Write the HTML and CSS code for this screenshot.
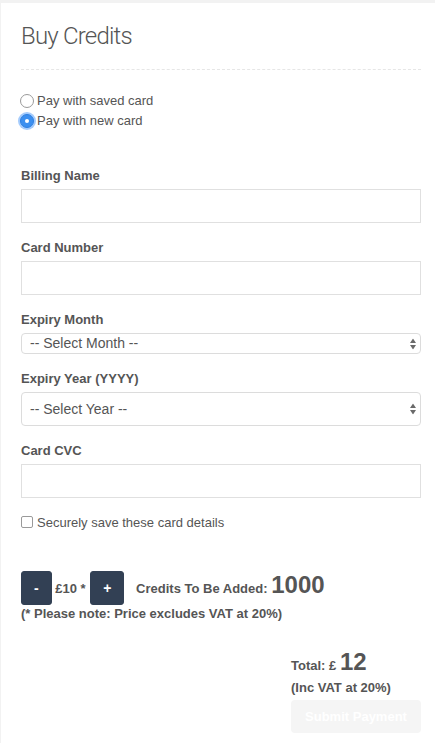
FILE: index.html
```html
<!DOCTYPE html>
<html>
<head>
<meta charset="utf-8">
<link rel="stylesheet" href="styles.css">
</head>
<body>
<div class="panel">
  <h2 class="title">Buy Credits</h2>
  <div class="divider"></div>
  <div class="radios">
    <label class="radio-row"><span class="radio"></span>Pay with saved card</label>
    <label class="radio-row"><span class="radio checked"></span>Pay with new card</label>
  </div>
  <form class="form">
    <div class="group">
      <label class="label">Billing Name</label>
      <input class="input" type="text">
    </div>
    <div class="group">
      <label class="label">Card Number</label>
      <input class="input" type="text">
    </div>
    <div class="group">
      <label class="label">Expiry Month</label>
      <div class="select-wrap">
        <select class="select small"><option>-- Select Month --</option></select>
        <svg class="arrows" width="6" height="11" viewBox="0 0 6 11"><path d="M3 0 L6 4.5 L0 4.5 Z M3 11 L6 6.5 L0 6.5 Z" fill="#6a6a6a"/></svg>
      </div>
    </div>
    <div class="group">
      <label class="label">Expiry Year (YYYY)</label>
      <div class="select-wrap">
        <select class="select large"><option>-- Select Year --</option></select>
        <svg class="arrows" width="6" height="11" viewBox="0 0 6 11"><path d="M3 0 L6 4.5 L0 4.5 Z M3 11 L6 6.5 L0 6.5 Z" fill="#6a6a6a"/></svg>
      </div>
    </div>
    <div class="group">
      <label class="label">Card CVC</label>
      <input class="input" type="text">
    </div>
  </form>
  <label class="check-row"><span class="checkbox"></span>Securely save these card details</label>
  <div class="credits">
    <button class="btn" type="button">-</button>
    <span class="price">£10 *</span>
    <button class="btn plus" type="button">+</button>
    <span class="credits-label">Credits To Be Added:</span>
    <span class="big">1000</span>
  </div>
  <div class="note">(* Please note: Price excludes VAT at 20%)</div>
  <div class="total">
    <div class="total-line">Total: £ <span class="big">12</span></div>
    <div class="inc">(Inc VAT at 20%)</div>
    <button class="submit" type="button">Submit Payment</button>
  </div>
</div>
</body>
</html>
```

FILE: styles.css
```css
html, body {
  margin: 0;
  padding: 0;
  background: #f2f2f2;
}
body {
  font-family: "Liberation Sans", Arial, sans-serif;
  color: #555;
  font-size: 13px;
}
.panel {
  margin: 3px 0 0 1px;
  background: #fff;
  padding: 19px 14px 10px 20px;
  min-height: 730px;
  box-sizing: border-box;
}
.title {
  margin: 0;
  font-family: Roboto, "Liberation Sans", sans-serif;
  font-weight: 300;
  font-size: 24px;
  line-height: 28px;
  color: #555;
  letter-spacing: -0.8px;
}
.divider {
  margin-top: 19px;
  border-top: 1px dashed #e6e6e6;
}
.radios {
  margin-top: 21px;
  display: flex;
  flex-direction: column;
}
.radio-row {
  display: flex;
  align-items: center;
  height: 20px;
  line-height: 20px;
  font-size: 13px;
}
.radio {
  width: 12px;
  height: 12px;
  border: 1px solid #9a9a9a;
  border-radius: 50%;
  box-sizing: content-box;
  margin: 0 3px 0 -1px;
  background: #fff;
  flex: none;
}
.radio.checked {
  background: #3b8ff0;
  border-color: #2d7fe0;
  box-shadow: 0 0 0 2px rgba(90, 160, 250, 0.55);
  position: relative;
}
.radio.checked::after {
  content: "";
  position: absolute;
  left: 4px;
  top: 4px;
  width: 4px;
  height: 4px;
  border-radius: 50%;
  background: #fff;
}
.form {
  margin-top: 36px;
  display: flex;
  flex-direction: column;
  gap: 16px;
}
.group {
  display: flex;
  flex-direction: column;
}
.label {
  font-weight: bold;
  font-size: 13px;
  line-height: 18px;
  margin-bottom: 4px;
}
.input {
  height: 34px;
  box-sizing: border-box;
  border: 1px solid #e0e0e0;
  margin: 0;
  width: 100%;
  background: #fff;
}
.select-wrap {
  position: relative;
}
.select {
  appearance: none;
  -webkit-appearance: none;
  width: 100%;
  box-sizing: border-box;
  border: 1px solid #dcdcdc;
  border-radius: 4px;
  background: #fff;
  font-family: "Liberation Sans", Arial, sans-serif;
  font-size: 14px;
  color: #555;
  padding: 0 0 0 8px;
  margin: 0;
}
.select.small {
  height: 21px;
  line-height: 19px;
}
.select.large {
  height: 34px;
}
.arrows {
  position: absolute;
  right: 5px;
  top: 50%;
  transform: translateY(-50%);
}
.check-row {
  display: flex;
  align-items: center;
  height: 20px;
  margin-top: 14px;
  font-size: 13px;
}
.checkbox {
  width: 10px;
  height: 10px;
  border: 1px solid #9a9a9a;
  border-radius: 2px;
  margin: 0 4px 0 0;
  flex: none;
}
.credits {
  margin-top: 39px;
  line-height: 20px;
  font-weight: bold;
  font-size: 13px;
}
.btn {
  display: inline-block;
  vertical-align: baseline;
  background: #324054;
  color: #fff;
  border: 1px solid #324054;
  border-radius: 3px;
  padding: 6px 12px;
  font-family: "Liberation Sans", Arial, sans-serif;
  font-weight: bold;
  font-size: 14px;
  line-height: 20px;
  margin: 0;
}
.btn.plus {
  margin-left: 1px;
}
.credits-label {
  margin-left: 8px;
}
.big {
  font-size: 24px;
  font-weight: bold;
}
.note {
  font-weight: bold;
  line-height: 18px;
  margin-top: 0;
}
.total {
  width: 130px;
  margin: 26px 0 0 auto;
  font-weight: bold;
}
.total-line {
  line-height: 26px;
}
.inc {
  line-height: 18px;
  margin-top: 0;
}
.submit {
  display: block;
  width: 130px;
  height: 33px;
  margin-top: 3px;
  background: #f5f5f5;
  color: #fff;
  border: 0;
  border-radius: 4px;
  font-family: "Liberation Sans", Arial, sans-serif;
  font-weight: bold;
  font-size: 13px;
}
```
